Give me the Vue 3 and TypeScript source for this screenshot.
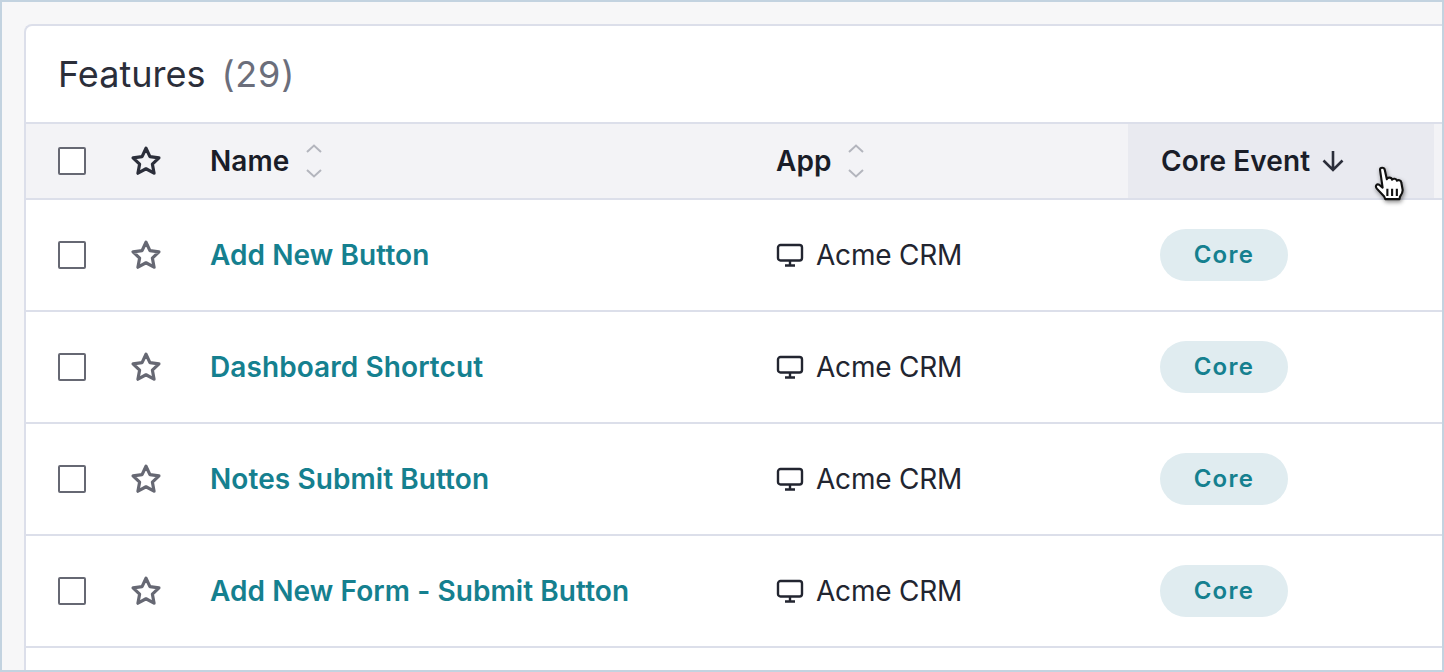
<script setup lang="ts">
const rows: string[] = [
  'Add New Button',
  'Dashboard Shortcut',
  'Notes Submit Button',
  'Add New Form - Submit Button',
]
</script>

<template>
  <div class="frame">
    <section class="card">
      <header class="title">
        <h1>Features</h1>
        <span class="count">(29)</span>
      </header>
      <div class="head grid">
        <div class="c-check">
          <span class="box on-head"></span>
          <svg class="star dark" viewBox="0 0 32 32" width="34" height="34">
            <path d="M16 4l3.700 7.900 8.500 1.100-6.200 5.900 1.600 8.600-7.600-4.200-7.600 4.200 1.600-8.600-6.200-5.900 8.500-1.100z" />
          </svg>
        </div>
        <div class="th">
          <span>Name</span>
          <svg class="sort" viewBox="0 0 16 34" width="16" height="34">
            <path d="M1 8l7-6.500 7 6.500M1 26l7 6.500 7-6.500" />
          </svg>
        </div>
        <div class="th">
          <span>App</span>
          <svg class="sort" viewBox="0 0 16 34" width="16" height="34">
            <path d="M1 8l7-6.500 7 6.500M1 26l7 6.500 7-6.500" />
          </svg>
        </div>
        <div class="th active">
          <span>Core Event</span>
          <svg class="down" viewBox="0 0 24 24" width="24" height="24">
            <path d="M12 2v19M2.500 11.500l9.500 9.500 9.500-9.500" />
          </svg>
          <svg class="hand" viewBox="0 0 32 38" width="34" height="40">
            <path d="M6.500 3.500c0-2.500 4-2.500 4.500 0l2 9c.5-2 4.500-2 5 .5.800-1.500 4.300-1 4.500 1 1-1 4-.5 4.200 1.500l1.300 7c.3 3-1.500 5-2.500 6.500l-.5 2.500H11.500l-1-2.500-7-7.500c-2-2.500 0-5 2.500-3.500l3 2.500z" />
            <path class="lines" d="M13.500 21.500v7M18 21.500v7M22.500 21.500v7" />
          </svg>
        </div>
      </div>
      <div v-for="name in rows" :key="name" class="row grid">
        <div class="c-check">
          <span class="box"></span>
          <svg class="star" viewBox="0 0 32 32" width="34" height="34">
            <path d="M16 4l3.700 7.900 8.500 1.100-6.200 5.900 1.600 8.600-7.600-4.200-7.600 4.200 1.600-8.600-6.200-5.900 8.500-1.100z" />
          </svg>
        </div>
        <div class="td"><a class="link">{{ name }}</a></div>
        <div class="td app">
          <svg class="monitor" viewBox="0 0 28 24" width="28" height="24">
            <rect x="2" y="2" width="24" height="15.500" rx="2.500" />
            <path d="M14 17.500v5M9 22.500h10" />
          </svg>
          <span>Acme CRM</span>
        </div>
        <div class="td"><span class="pill">Core</span></div>
      </div>
    </section>
  </div>
</template>

<style>
html, body { margin: 0; background: #f7f7f7; }
</style>

<style scoped>
.frame {
  box-sizing: border-box;
  width: 1444px;
  height: 672px;
  overflow: hidden;
  border: 2px solid #c3d3e0;
  background: #f7f7f8;
  padding: 22px 0 0 22px;
  font-family: Inter, "Noto Sans", sans-serif;
  color: #1a1d28;
}
.card {
  box-sizing: border-box;
  height: 648px;
  background: #fff;
  border: 2px solid #dcdfea;
  border-right: 0;
  border-bottom: 0;
  border-top-left-radius: 8px;
}
.title {
  box-sizing: border-box;
  height: 98px;
  display: flex;
  align-items: center;
  gap: 16px;
  padding-left: 32px;
  border-bottom: 2px solid #dcdfea;
}
h1 {
  margin: 0;
  font-size: 36px;
  font-weight: 400;
  color: #2b2e3a;
}
.count {
  font-size: 36px;
  color: #6b6e7b;
  letter-spacing: 0.8px;
}
.grid {
  display: grid;
  grid-template-columns: 152px 566px 384px 306px 1fr;
  box-sizing: border-box;
}
.head {
  height: 76px;
  background: #f3f3f6;
  border-bottom: 2px solid #dcdfea;
}
.row {
  height: 112px;
  border-bottom: 2px solid #dcdfea;
}
.c-check {
  display: flex;
  align-items: center;
  padding-left: 32px;
  gap: 43px;
}
.box {
  box-sizing: border-box;
  width: 28px;
  height: 28px;
  border: 2px solid #666873;
  border-radius: 2px;
  background: #fff;
  flex: none;
}
.star {
  flex: none;
  fill: none;
  stroke: #666873;
  stroke-width: 3;
  stroke-linejoin: round;
}
.star.dark { stroke: #2b2e3a; }
.th {
  display: flex;
  align-items: center;
  padding-left: 32px;
  font-size: 28px;
  font-weight: 600;
  letter-spacing: 0.1px;
  color: #1a1d28;
  position: relative;
}
.sort {
  margin-left: 16px;
  fill: none;
  stroke: #b3b5bd;
  stroke-width: 2;
}
.active {
  background: #e9eaf0;
  padding-left: 33px;
}
.down {
  margin-left: 11px;
  fill: none;
  stroke: #2b2e3a;
  stroke-width: 2.600;
}
.hand {
  position: absolute;
  left: 245px;
  top: 42px;
  fill: #fff;
  stroke: #111;
  stroke-width: 2;
  stroke-linejoin: round;
  filter: drop-shadow(1px 2px 2px rgba(0, 0, 0, 0.45));
}
.lines { fill: none; stroke-width: 2; }
.td {
  display: flex;
  align-items: center;
  padding-left: 32px;
  font-size: 28px;
}
.link {
  color: #15808f;
  font-weight: 600;
  letter-spacing: 0.08px;
}
.app { gap: 12px; color: #222530; letter-spacing: -0.2px; }
.monitor {
  fill: none;
  stroke: #222530;
  stroke-width: 2.400;
  flex: none;
}
.pill {
  box-sizing: border-box;
  width: 128px;
  height: 52px;
  padding-bottom: 1px;
  border-radius: 26px;
  background: #e0ecf0;
  color: #15808f;
  display: flex;
  align-items: center;
  justify-content: center;
  font-size: 24px;
  font-weight: 600;
  letter-spacing: 1.300px;
}
</style>
